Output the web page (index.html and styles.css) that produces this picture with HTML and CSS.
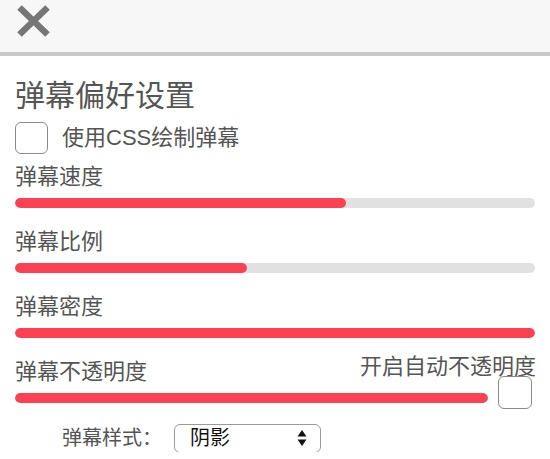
FILE: index.html
```html
<!DOCTYPE html>
<html lang="zh-CN">
<head>
<meta charset="utf-8">
<title>弹幕偏好设置</title>
<link rel="stylesheet" href="styles.css">
</head>
<body>
<div class="header">
  <svg class="close" width="33" height="32" viewBox="0 0 33 32" aria-label="关闭">
    <line x1="2.5" y1="2.5" x2="30.5" y2="29.5"/>
    <line x1="30.5" y1="2.5" x2="2.5" y2="29.5"/>
  </svg>
</div>
<div class="content">
  <div class="title">弹幕偏好设置</div>
  <label class="check-row">
    <input type="checkbox" class="box">
    <span class="check-text">使用CSS绘制弹幕</span>
  </label>

  <div class="group">
    <div class="label">弹幕速度</div>
    <div class="track"><div class="fill" style="width:63.7%"></div></div>
  </div>
  <div class="group">
    <div class="label">弹幕比例</div>
    <div class="track"><div class="fill" style="width:44.6%"></div></div>
  </div>
  <div class="group">
    <div class="label">弹幕密度</div>
    <div class="track"><div class="fill" style="width:100%"></div></div>
  </div>
  <div class="group opacity">
    <div class="top-row">
      <div class="label">弹幕不透明度</div>
      <div class="auto-text">开启自动不透明度</div>
    </div>
    <div class="bottom-row">
      <div class="track"><div class="fill" style="width:100%"></div></div>
      <input type="checkbox" class="box auto-box">
    </div>
  </div>

  <div class="style-row">
    <span class="style-label">弹幕样式：</span>
    <span class="select-wrap">
      <select class="select">
        <option>阴影</option>
        <option>描边</option>
      </select>
      <svg class="arrows" width="10" height="18" viewBox="0 0 10 18">
        <path d="M5 1 L9.5 7.5 L0.5 7.5 Z"/>
        <path d="M5 17 L9.5 10.5 L0.5 10.5 Z"/>
      </svg>
    </span>
  </div>
</div>
</body>
</html>
```

FILE: styles.css
```css
html, body {
  margin: 0;
  padding: 0;
  background: #ffffff;
}

body {
  font-family: "Liberation Sans", "Noto Sans CJK SC", sans-serif;
  color: #555555;
  width: 550px;
  overflow: hidden;
}

.header {
  height: 52px;
  background: #f7f7f7;
  border-bottom: 4px solid #c8c8c8;
  display: flex;
  align-items: flex-start;
  padding-left: 17px;
}

.close {
  margin-top: 5px;
  stroke: #767676;
  stroke-width: 6.5;
  stroke-linecap: butt;
}

.content {
  padding: 0 15px;
}

.title {
  margin-top: 20px;
  font-size: 30px;
  line-height: 40px;
  height: 40px;
}

.check-row {
  display: flex;
  align-items: center;
  margin-top: 6px;
  height: 32px;
}

.box {
  appearance: none;
  -webkit-appearance: none;
  margin: 0;
  width: 33px;
  height: 32px;
  border: 1.5px solid #8a8a8a;
  border-radius: 6px;
  background: #ffffff;
  box-sizing: border-box;
  flex: none;
}

.check-text {
  margin-left: 14px;
  font-size: 22px;
  line-height: 32px;
}

.group {
  margin-top: 8px;
}

.group + .group {
  margin-top: 19px;
}

.label {
  font-size: 22px;
  line-height: 30px;
  height: 30px;
}

.track {
  margin-top: 6px;
  height: 10px;
  border-radius: 5px;
  background: #e1e1e1;
  overflow: hidden;
}

.fill {
  height: 100%;
  border-radius: 5px;
  background: #fe4152;
}

.top-row {
  display: flex;
  justify-content: space-between;
  align-items: flex-start;
}

.auto-text {
  font-size: 22px;
  line-height: 20px;
  margin-right: -1px;
}

.bottom-row {
  display: flex;
  align-items: flex-start;
  margin-top: 6px;
  height: 10px;
}

.bottom-row .track {
  flex: 1;
  margin-top: 0;
}

.auto-box {
  margin: -17px 3px 0 10px;
  width: 34px;
  height: 33px;
}

.style-row {
  display: flex;
  align-items: center;
  margin-top: 21px;
  padding-left: 47px;
  height: 28px;
}

.style-label {
  font-size: 20px;
  line-height: 28px;
  width: 112px;
}

.select-wrap {
  position: relative;
  display: inline-block;
  width: 147px;
  height: 29px;
}

.select {
  appearance: none;
  -webkit-appearance: none;
  width: 100%;
  height: 100%;
  margin: 0;
  padding: 0 0 0 15px;
  border: 1.5px solid #9a9a9a;
  border-radius: 6px;
  background: #ffffff;
  font-family: "Liberation Sans", "Noto Sans CJK SC", sans-serif;
  font-size: 20px;
  color: #111111;
  box-sizing: border-box;
  line-height: 26px;
}

.arrows {
  position: absolute;
  right: 14px;
  top: 5px;
  fill: #111111;
  pointer-events: none;
}
```
